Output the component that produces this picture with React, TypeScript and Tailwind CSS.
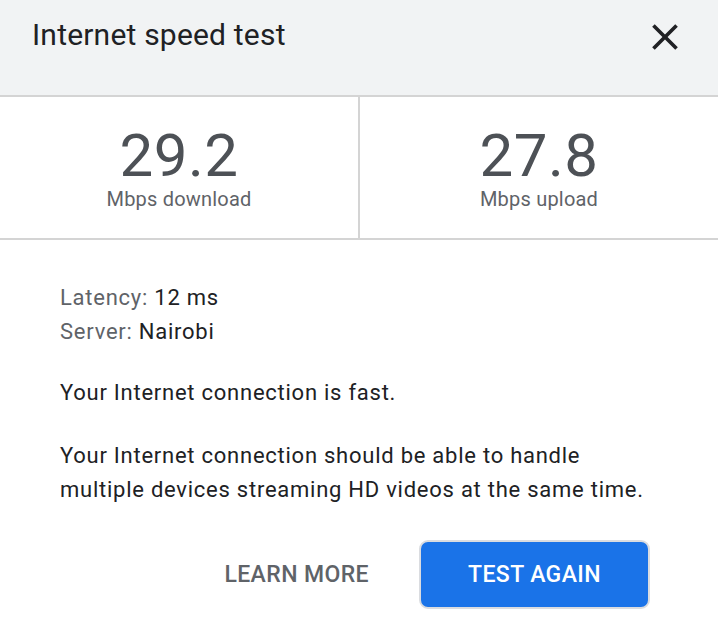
import React from 'react';

const Stat = ({ value, label }: { value: string; label: string }) => (
  <div className="flex flex-col items-center pt-[29px] pb-[27px]">
    <div className="text-[60px] leading-[60px] tracking-[0.5px] text-[#4d5156]">{value}</div>
    <div className="mt-[1px] text-[20px] leading-6 tracking-[0.2px] text-[#5f6368]">{label}</div>
  </div>
);

const App = () => {
  return (
    <div className="w-[718px] h-[639px] bg-white font-['Roboto',sans-serif] text-[#202124]">
      <div className="h-[95px] bg-[#f1f3f4] flex items-start justify-between pl-[32px] pr-[31px] pt-[14px]">
        <h1 className="text-[30px] leading-[42px] font-normal tracking-[0.2px]">Internet speed test</h1>
        <button className="mt-[1px] text-[#202124]" aria-label="Close">
          <svg width="44" height="44" viewBox="0 0 24 24">
            <path
              fill="currentColor"
              d="M19 6.41 17.59 5 12 10.59 6.41 5 5 6.41 10.59 12 5 17.59 6.41 19 12 13.41 17.59 19 19 17.59 13.41 12z"
            />
          </svg>
        </button>
      </div>

      <div className="grid grid-cols-[358px_2px_358px] border-y-2 border-[#d4d4d4]">
        <Stat value="29.2" label="Mbps download" />
        <div className="bg-[#d4d4d4]" />
        <Stat value="27.8" label="Mbps upload" />
      </div>

      <div className="px-[60px] pt-[41px] text-[22px] leading-[34px] tracking-[0.75px]">
        <div>
          <span className="text-[#5f6368]">Latency: </span>12 ms
        </div>
        <div>
          <span className="text-[#5f6368]">Server: </span>Nairobi
        </div>
        <p className="mt-[27px]">Your Internet connection is fast.</p>
        <p className="mt-[29px]">
          Your Internet connection should be able to handle multiple devices streaming HD videos at the same time.
        </p>

        <div className="mt-[33px] flex items-center justify-end gap-[50px] pr-[8px]">
          <button className="text-[23px] font-medium tracking-[0.4px] text-[#5f6368]">LEARN MORE</button>
          <button className="w-[231px] h-[69px] rounded-[9px] border-2 border-[#dadce0] bg-[#1a73e8] text-[23px] font-medium tracking-[0.4px] text-white">
            TEST AGAIN
          </button>
        </div>
      </div>
    </div>
  );
};

export default App;
